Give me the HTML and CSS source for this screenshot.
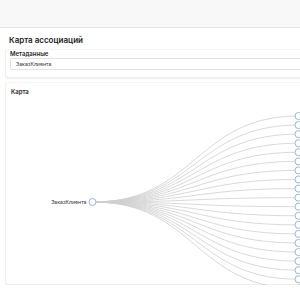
FILE: index.html
```html
<!DOCTYPE html>
<html>

<head>
    <title>Карта ассоциаций</title>
    <meta charset="utf-8">
    <link rel="stylesheet" href="styles.css">
</head>

<body>
    <header class="topbar"></header>

    <main class="page">
        <h1 class="title">Карта ассоциаций</h1>

        <section class="card meta">
            <label class="card-label" for="meta">Метаданные</label>
            <input id="meta" class="field" type="text" value="ЗаказКлиента" readonly>
        </section>

        <section class="card map">
            <div class="card-label">Карта</div>
            <svg id="tree" class="tree" width="400" height="186"></svg>
        </section>
    </main>

    <script>
        // дерево связей: корень слева, 20 потомков справа
        const svg = document.getElementById('tree')
        const root = { x: 86.5, y: 105 }
        const leafX = 292.5
        let links = ''
        let nodes = ''

        for (let i = 0; i < 20; i++) {
            const y = 19 + i * 9.07
            const mx = (root.x + leafX) / 2
            links += `<path class="link" d="M${root.x},${root.y}C${mx},${root.y} ${mx},${y} ${leafX},${y}"/>`
            nodes += `<circle class="node" cx="${leafX}" cy="${y}" r="3.5"/>`
        }
        nodes += `<circle class="node" cx="${root.x}" cy="${root.y}" r="3.5"/>`
        nodes += `<text class="node-label" x="${root.x - 6}" y="${root.y + 2}">ЗаказКлиента</text>`

        svg.innerHTML = links + nodes
    </script>
</body>

</html>
```
FILE: styles.css
```css
html {
    overflow: hidden;
}

body {
    margin: 0;
    background-color: #fff;
    color: #222;
    font-family: Inter, "Noto Sans", sans-serif;
}

.topbar {
    height: 27px;
    background-color: #f8f8f8;
    border-bottom: 1px solid #e4e4e4;
}

.page {
    width: 420px;
    padding: 0 0 0 5px;
}

.title {
    margin: 0;
    padding: 6px 0 0 4px;
    font-size: 8px;
    font-weight: 600;
    line-height: 13px;
    color: #1a1a1a;
}

.card {
    background-color: #fff;
    border: 1px solid #efefef;
    border-top-color: #f6f6f6;
    border-radius: 3px;
    box-shadow: 0 1px 1px rgba(0, 0, 0, 0.06);
}

.meta {
    margin-top: 2px;
    padding: 0 4px 7px 4px;
}

.card-label {
    display: block;
    font-size: 6px;
    font-weight: 600;
    line-height: 7px;
    color: #2a2a2a;
}

.field {
    display: block;
    box-sizing: border-box;
    width: 100%;
    height: 12px;
    margin-top: 1px;
    padding: 0 5px;
    border: 1px solid #e2e2e2;
    border-radius: 2px;
    font-family: inherit;
    font-size: 5.2px;
    color: #333;
    outline: none;
}

.map {
    margin-top: 4px;
    height: 201px;
}

.map .card-label {
    padding: 5px 0 1px 5px;
}

.tree {
    display: block;
    overflow: visible;
    margin-top: 1px;
}

.link {
    fill: none;
    stroke: #cfcfcf;
    stroke-width: 0.8;
}

.node {
    fill: #fff;
    stroke: #9db4de;
    stroke-width: 1;
}

.node-label {
    font-size: 5.2px;
    fill: #333;
    text-anchor: end;
}
```
